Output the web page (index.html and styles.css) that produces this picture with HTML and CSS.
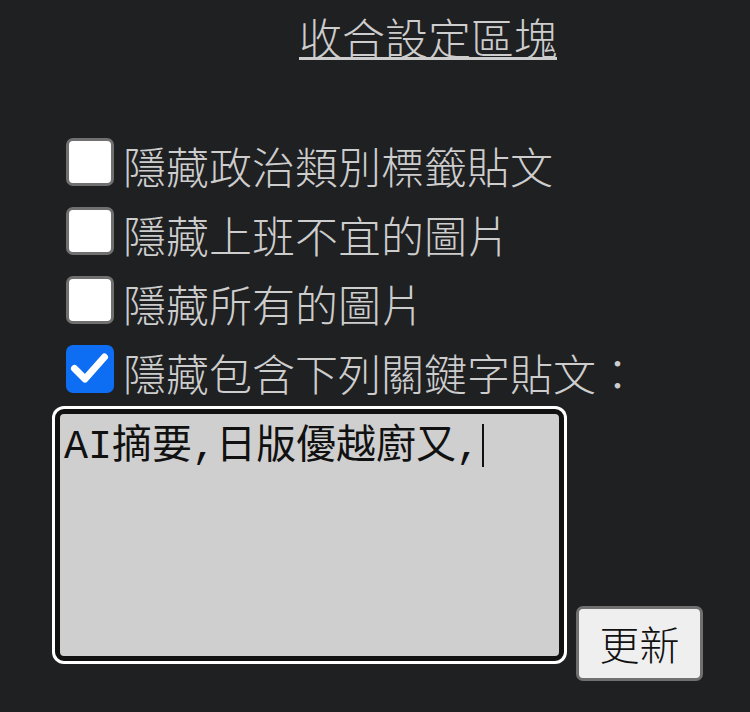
FILE: index.html
```html
<!DOCTYPE html>
<html lang="zh-Hant">
<head>
<meta charset="utf-8">
<title>收合設定區塊</title>
<link rel="stylesheet" href="styles.css">
</head>
<body>
<main class="panel">
  <h2 class="title">收合設定區塊</h2>
  <ul class="options">
    <li class="option"><span class="box"></span><span class="label">隱藏政治類別標籤貼文</span></li>
    <li class="option"><span class="box"></span><span class="label">隱藏上班不宜的圖片</span></li>
    <li class="option"><span class="box"></span><span class="label">隱藏所有的圖片</span></li>
    <li class="option"><span class="box checked"><svg viewBox="0 0 48 48" width="48" height="48"><path d="M8.5 23.5 L19 34 L38.5 12" fill="none" stroke="#fff" stroke-width="7" stroke-linecap="round" stroke-linejoin="round"/></svg></span><span class="label">隱藏包含下列關鍵字貼文：</span></li>
  </ul>
  <div class="editor">
    <div class="textbox">AI摘要,日版優越廚又,<span class="caret"></span></div>
    <button class="btn" type="button">更新</button>
  </div>
</main>
</body>
</html>
```
FILE: styles.css
```css
html, body {
  margin: 0;
  padding: 0;
  background: #1f2022;
}

.panel {
  padding-top: 2px;
  font-family: "Noto Sans CJK TC", "Noto Sans", sans-serif;
  color: #cdcdcd;
}

.title {
  margin: 0 0 60px 299px;
  font-size: 43px;
  font-weight: 300;
  line-height: 69px;
  text-decoration: underline;
  text-decoration-thickness: 3px;
}

.options {
  list-style: none;
  margin: 0;
  padding: 0 0 0 66px;
}

.option {
  display: flex;
  align-items: flex-start;
  height: 69px;
}

.box {
  box-sizing: border-box;
  flex: none;
  width: 48px;
  height: 48px;
  margin-top: 7px;
  margin-right: 9px;
  border: 3px solid #707070;
  border-radius: 7px;
  background: #ffffff;
}

.box.checked {
  border: none;
  background: #0d6ef4;
  overflow: hidden;
}

.box svg {
  display: block;
}

.label {
  font-size: 43px;
  font-weight: 300;
  line-height: 69px;
}

.editor {
  display: flex;
  align-items: flex-end;
  gap: 12px;
  padding: 2px 0 0 55px;
}

.textbox {
  box-sizing: border-box;
  width: 509px;
  height: 252px;
  margin-bottom: 20px;
  padding: 6px 4px 4px;
  border: 5px solid #111111;
  border-radius: 9px;
  box-shadow: 0 0 0 3px #ffffff;
  background: #cfcfcf;
  color: #111111;
  font-family: "Liberation Mono", "Noto Sans CJK TC", monospace;
  font-size: 40px;
  font-weight: 400;
  line-height: 56px;
}

.caret {
  display: inline-block;
  width: 2px;
  height: 43px;
  margin-left: 2px;
  vertical-align: -9px;
  background: #111111;
}

.btn {
  box-sizing: border-box;
  width: 127px;
  height: 75px;
  padding: 6px 20px;
  border: 3px solid #707070;
  border-radius: 7px;
  background: #efefef;
  color: #111111;
  font-family: "Noto Sans CJK TC", sans-serif;
  font-size: 40px;
  font-weight: 300;
  line-height: 57px;
}
```
